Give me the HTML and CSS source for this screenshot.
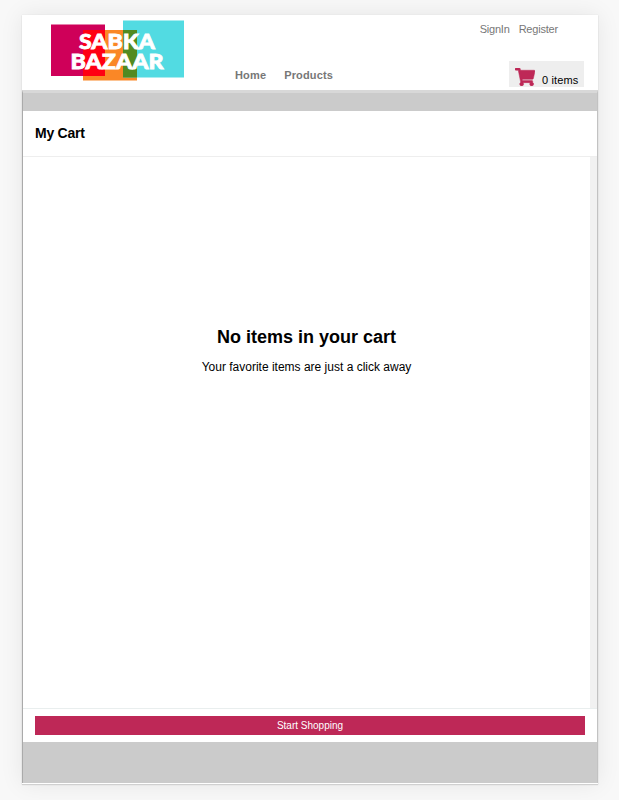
FILE: index.html
```html
<!DOCTYPE html>
<html lang="en">
<head>
<meta charset="utf-8">
<title>Sabka Bazaar</title>
<link rel="stylesheet" href="styles.css">
</head>
<body>
<div class="page">
  <header class="header">
    <svg class="logo" width="134" height="62" viewBox="51 20 134 62" role="img" aria-label="Sabka Bazaar">
      <rect x="51" y="24.5" width="54" height="51.5" fill="#cf0059"/>
      <rect x="83" y="30" width="54" height="50.5" fill="#fa8726"/>
      <rect x="83" y="30" width="22" height="46" fill="#ff0012"/>
      <rect x="123" y="20.5" width="61" height="57" fill="#52dbe2"/>
      <rect x="123" y="30" width="14" height="47.5" fill="#528a21"/>
      <g class="logo-text">
        <text x="79" y="48.700" textLength="76" lengthAdjust="spacingAndGlyphs">SABKA</text>
        <text x="70.500" y="69" textLength="93" lengthAdjust="spacingAndGlyphs">BAZAAR</text>
      </g>
    </svg>
    <nav class="nav">
      <a>Home</a>
      <a>Products</a>
    </nav>
    <div class="account">
      <div class="links"><a>SignIn</a><a>Register</a></div>
      <div class="basket">
        <svg class="cart-icon" width="20" height="18" viewBox="0 0 576 512" preserveAspectRatio="none">
          <path fill="#be2857" stroke="#be2857" stroke-width="14" d="M528.1 301.3l47.3-208C578.8 78.300 567.400 64 552 64H159.200l-9.200-44.800C147.800 8 137.900 0 126.500 0H24C10.700 0 0 10.700 0 24v16c0 13.300 10.700 24 24 24h69.900l70.200 343.400C147.300 417.100 136 435.200 136 456c0 30.900 25.100 56 56 56s56-25.100 56-56c0-15.700-6.400-29.800-16.800-40h209.600C430.400 426.200 424 440.300 424 456c0 30.900 25.100 56 56 56s56-25.100 56-56c0-22.200-12.900-41.300-31.600-50.400l5.500-24.300c3.400-15-8-29.300-23.400-29.300H218.100l-6.500-32h293.100c11.200 0 20.900-7.800 23.400-18.700z"/>
        </svg>
        <span>0 items</span>
      </div>
    </div>
  </header>
  <main class="overlay">
    <section class="cart">
      <h1 class="title">My Cart</h1>
      <div class="content">
        <div class="empty">
          <h2>No items in your cart</h2>
          <p>Your favorite items are just a click away</p>
        </div>
        <div class="track"></div>
      </div>
      <div class="footer"><button class="start">Start Shopping</button></div>
    </section>
  </main>
</div>
</body>
</html>
```
FILE: styles.css
```css
* { box-sizing: border-box; }
body {
  margin: 0;
  height: 800px;
  padding: 15px 21px 0 22px;
  overflow: hidden;
  background: #f8f8f8;
  font-family: "Liberation Sans", Arial, sans-serif;
}
.page {
  width: 576px;
  height: 769px;
  background: #fff;
  box-shadow: 0 1px 1px #d0d0d0, 0 0 1px #d8d8d8, 0 0 22px rgba(0, 0, 0, .08);
}
.header {
  display: flex;
  height: 75px;
  padding-left: 29px;
}
.logo { margin-top: 5px; flex: none; }
.logo-text {
  font-family: Lato, sans-serif;
  font-size: 21.5px;
  font-weight: 900;
  fill: #fff;
  stroke: #fff;
  stroke-width: .8px;
}
.nav {
  display: flex;
  gap: 18px;
  margin: 54px 0 0 50px;
  font-size: 11px;
  line-height: 13px;
  font-weight: bold;
  letter-spacing: .15px;
  color: #777;
}
.account {
  display: flex;
  flex-direction: column;
  align-items: flex-end;
  margin-left: auto;
  padding-right: 14px;
}
.links {
  display: flex;
  gap: 9px;
  margin: 8px 26px 0 0;
  font-size: 11px;
  line-height: 13px;
  letter-spacing: -.2px;
  color: #777;
}
.basket {
  display: flex;
  width: 75px;
  height: 26px;
  margin-top: 25px;
  padding: 7px 0 0 6px;
  background: #eee;
  font-size: 11px;
}
.cart-icon { flex: none; }
.basket span {
  margin: 6px 0 0 7px;
  line-height: 13px;
  letter-spacing: .15px;
  white-space: nowrap;
}
.overlay {
  height: 693px;
  padding-top: 18px;
  border-top: 3px solid #d8d8d8;
  border-left: 1px solid #aaa;
  border-right: 1px solid #c2c2c2;
  background: #cbcbcb;
}
.cart { height: 631px; background: #fff; }
.title {
  height: 45px;
  margin: 0;
  padding-left: 12px;
  font-size: 14px;
  letter-spacing: -.25px;
  line-height: 45px;
}
.content {
  display: flex;
  height: 553px;
  border-top: 1px solid #eee;
  border-bottom: 1px solid #e9eeee;
}
.empty { flex: 1; padding-top: 169px; text-align: center; }
.empty h2 { margin: 0; font-size: 18px; line-height: 22px; }
.empty p { margin: 12px 0 0; font-size: 12px; line-height: 14px; }
.track { width: 7px; background: #f1f1f1; }
.footer { padding: 7px 12px 0; }
.start {
  display: block;
  width: 100%;
  height: 19px;
  padding: 0;
  border: 0;
  background: #be2857;
  color: #fff;
  font: 10px/19px "Liberation Sans", Arial, sans-serif;
}
```
